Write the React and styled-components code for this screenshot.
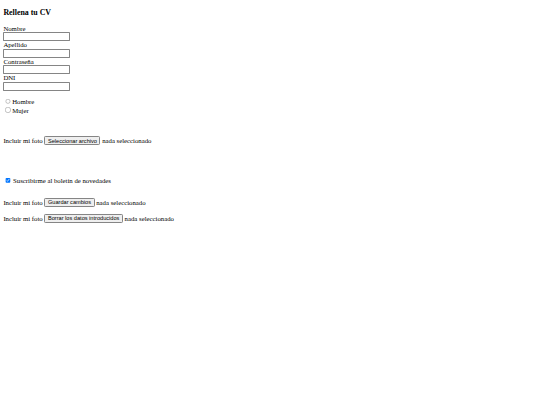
import React from "react";
import styled, { createGlobalStyle } from "styled-components";

const Global = createGlobalStyle`
  html, body { margin: 0; padding: 0; background: #fff; }
  #root { width: 540px; height: 405px; overflow: hidden; }
`;

const Page = styled.div`
  width: 1280px;
  height: 960px;
  zoom: 0.421875;
  padding: 0 8px;
  box-sizing: border-box;
  font-family: "Liberation Serif", "Times New Roman", serif;
  font-size: 16px;
  color: #000;
`;

const Title = styled.h3`
  font-size: 18.72px;
  font-weight: bold;
  margin: 18.72px 0;
  line-height: 21.5px;
`;

const Form = styled.form`
  display: flex;
  flex-direction: column;
  align-items: flex-start;
`;

const Label = styled.label`
  display: block;
  line-height: 18px;
`;

const TextInput = styled.input`
  font-family: "Liberation Sans", Arial, sans-serif;
  font-size: 13.33px;
  width: 157px;
  height: 21px;
  box-sizing: border-box;
  border: 1px solid #858585;
  border-radius: 2px;
  padding: 1px 2px;
  margin: 0;
`;

const RadioGroup = styled.div`
  margin: 16px 0 0;
  display: flex;
  flex-direction: column;
`;

const RadioRow = styled.label`
  display: flex;
  align-items: center;
  height: 20px;
`;

const Radio = styled.input`
  margin: 0 3px 0 5px;
  width: 13px;
  height: 13px;
`;

const Row = styled.div`
  display: flex;
  align-items: center;
  gap: 4px;
  height: 22px;
  margin-top: ${(p) => p.$mt}px;
`;

const Button = styled.button`
  font-family: "Liberation Sans", Arial, sans-serif;
  font-size: 13.33px;
  color: #000;
  background: #efefef;
  border: 1px solid #858585;
  border-radius: 3px;
  padding: 1px 6px;
  height: 21px;
  margin: 0;
`;

const CheckRow = styled.label`
  display: flex;
  align-items: center;
  height: 20px;
  margin-top: ${(p) => p.$mt}px;
`;

const Check = styled.input`
  margin: 0 6px 0 4px;
  width: 13px;
  height: 13px;
`;

function FileRow({ label, mt }) {
  return (
    <Row $mt={mt}>
      <span>Incluir mi foto</span>
      <Button type="button">{label}</Button>
      <span>nada seleccionado</span>
    </Row>
  );
}

export default function App() {
  return (
    <>
      <Global />
      <Page>
        <Title>Rellena tu CV</Title>
        <Form onSubmit={(e) => e.preventDefault()}>
          <Label>Nombre</Label>
          <TextInput type="text" />
          <Label>Apellido</Label>
          <TextInput type="text" />
          <Label>Contraseña</Label>
          <TextInput type="password" />
          <Label>DNI</Label>
          <TextInput type="text" />
          <RadioGroup>
            <RadioRow>
              <Radio type="radio" name="sexo" />
              Hombre
            </RadioRow>
            <RadioRow>
              <Radio type="radio" name="sexo" />
              Mujer
            </RadioRow>
          </RadioGroup>
          <FileRow label="Seleccionar archivo" mt={52} />
          <CheckRow $mt={73}>
            <Check type="checkbox" defaultChecked />
            Suscribirme al boletín de novedades
          </CheckRow>
          <FileRow label="Guardar cambios" mt={31} />
          <FileRow label="Borrar los datos introducidos" mt={15} />
        </Form>
      </Page>
    </>
  );
}
